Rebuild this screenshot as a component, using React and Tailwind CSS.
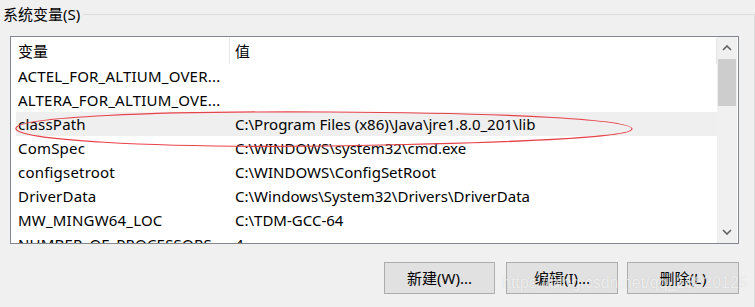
import React from "react";

const rows = [
  ["ACTEL_FOR_ALTIUM_OVER...", ""],
  ["ALTERA_FOR_ALTIUM_OVE...", ""],
  ["classPath", "C:\\Program Files (x86)\\Java\\jre1.8.0_201\\lib"],
  ["ComSpec", "C:\\WINDOWS\\system32\\cmd.exe"],
  ["configsetroot", "C:\\WINDOWS\\ConfigSetRoot"],
  ["DriverData", "C:\\Windows\\System32\\Drivers\\DriverData"],
  ["MW_MINGW64_LOC", "C:\\TDM-GCC-64"],
  ["NUMBER_OF_PROCESSORS", "4"],
];

const font = { fontFamily: '"Noto Sans", "Noto Sans CJK SC", sans-serif' };

function Button({ className, children }) {
  return (
    <button
      className={
        "h-[32px] bg-[#e1e1e1] border border-[#adadad] text-[15px] text-black flex items-center justify-center " +
        className
      }
    >
      {children}
    </button>
  );
}

export default function App() {
  return (
    <div
      className="relative w-[755px] h-[307px] bg-[#f0f0f0] overflow-hidden text-black"
      style={font}
    >
      {/* group header */}
      <div className="flex h-[28px]">
        <div className="pl-[3px] pr-[3px] flex items-center text-[15px] leading-none">
          系统变量(S)
        </div>
        <div className="flex-1 mt-[14px] border-t border-r border-[#dcdcdc]" />
      </div>

      <div className="border-r border-[#dcdcdc] h-[279px] pl-[10px] pr-[15px] pt-[8px]">
        {/* list view */}
        <div className="h-[208px] border border-[#828790] bg-white flex">
          <div className="flex-1 flex flex-col text-[15px]">
            <div className="h-[27px] flex items-center pt-[2px]">
              <div className="w-[218px] pl-[7px]">变量</div>
              <div className="w-px h-[26px] self-end bg-[#e5e5e5]" />
              <div className="flex-1 pl-[5px]">值</div>
              <div className="w-px h-[26px] self-end bg-[#e5e5e5]" />
            </div>
            <div className="flex-1 overflow-hidden">
              {rows.map(([k, v]) => (
                <div
                  key={k}
                  className={
                    "ml-[5px] h-[24px] flex items-center whitespace-nowrap " +
                    (k === "classPath" ? "bg-[#efefef]" : "")
                  }
                >
                  <div className="w-[219px] pl-[2px] tracking-[0.2px]">{k}</div>
                  <div className="flex-1">{v}</div>
                </div>
              ))}
            </div>
          </div>
          {/* scrollbar */}
          <div className="w-[20px] mr-[1px] bg-[#f0f0f0] flex flex-col">
            <div className="h-[22px] flex items-center justify-center">
              <svg width="10" height="6" viewBox="0 0 10 6">
                <polyline points="1,5 5,1 9,5" fill="none" stroke="#606060" strokeWidth="1.6" />
              </svg>
            </div>
            <div className="h-[47px] mx-[1px] bg-[#cdcdcd]" />
            <div className="flex-1" />
            <div className="h-[22px] flex items-center justify-center">
              <svg width="10" height="6" viewBox="0 0 10 6">
                <polyline points="1,1 5,5 9,1" fill="none" stroke="#606060" strokeWidth="1.6" />
              </svg>
            </div>
          </div>
        </div>

        {/* buttons */}
        <div className="flex justify-end mt-[18px]">
          <Button className="w-[111px]">新建(W)...</Button>
          <Button className="w-[112px] ml-[11px]">编辑(I)...</Button>
          <Button className="w-[112px] ml-[9px]">删除(L)</Button>
        </div>
      </div>

      {/* red annotation ellipse */}
      <svg
        className="absolute left-0 top-0 pointer-events-none"
        width="755"
        height="307"
      >
        <path
          d="M16,128 C20,117 150,111 330,112 C520,113 632,120 632,129 C632,137 520,143 330,146 C150,148 12,140 16,128 Z"
          fill="none"
          stroke="#e8434b"
          strokeWidth="1.2"
        />
      </svg>

      {/* watermark */}
      <div
        className="absolute left-[502px] top-[271px] text-[16px] text-white/70 whitespace-nowrap pointer-events-none"
        style={{ fontFamily: '"Liberation Sans", Arial, sans-serif', textShadow: "0 0 1px rgba(0,0,0,0.15)" }}
      >
        https://blog.csdn.net/qq_18820125
      </div>
    </div>
  );
}
